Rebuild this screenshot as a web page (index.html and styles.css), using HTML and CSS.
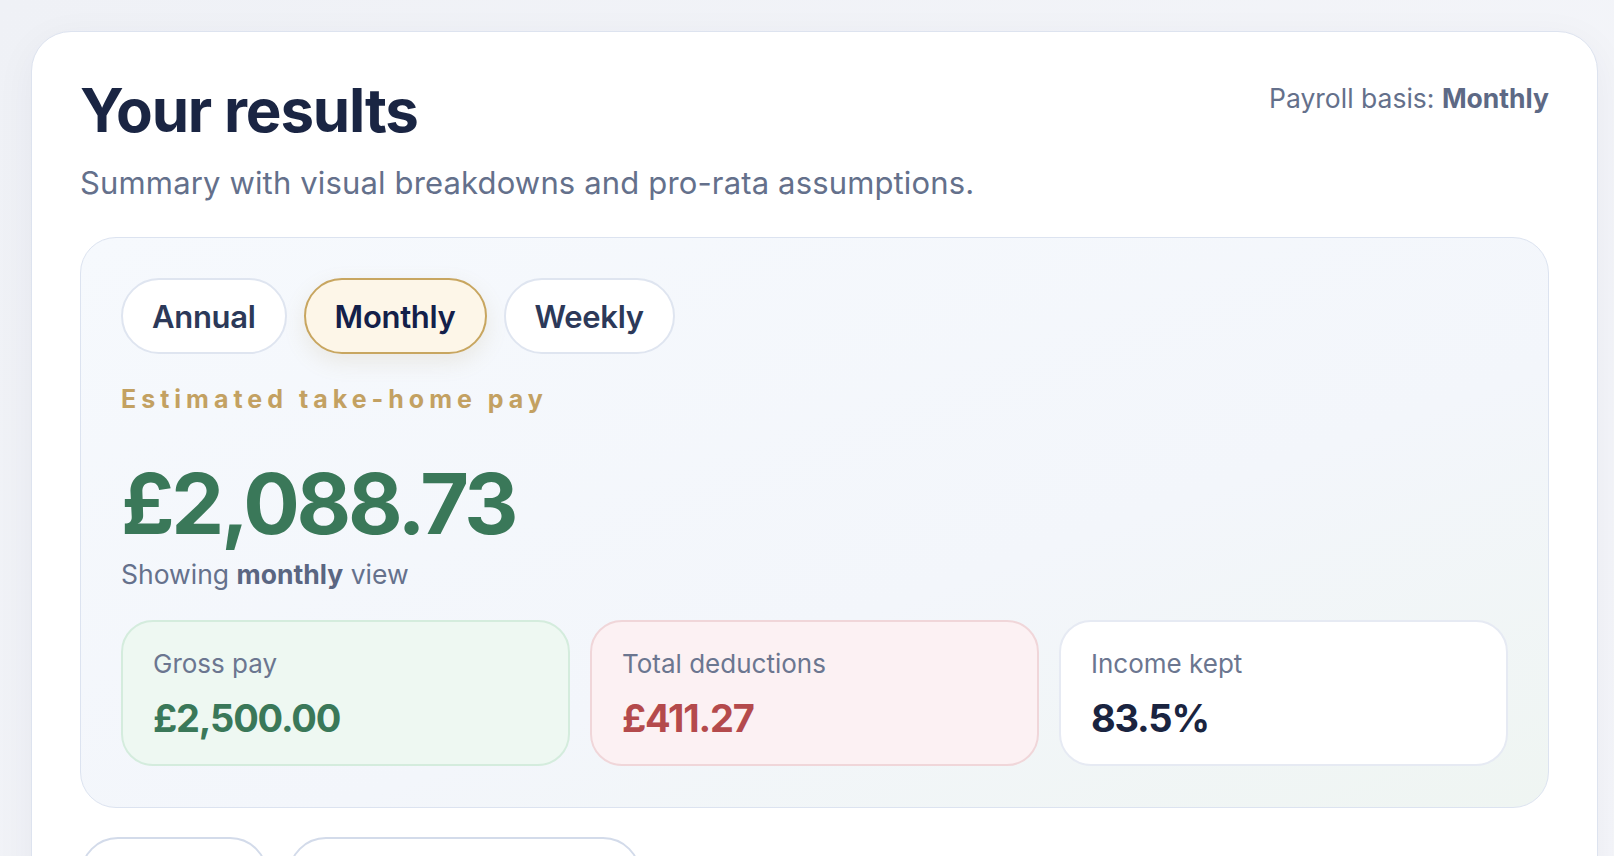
FILE: index.html
```html
<!DOCTYPE html>
<html lang="en">
<head>
    <meta charset="UTF-8">
    <meta name="viewport" content="width=device-width, initial-scale=1.0">
    <title>Your results</title>
    <link rel="stylesheet" href="styles.css">
</head>
<body>
    <div class="page">
        <section class="results-card">
            <header class="results-head">
                <div>
                    <h1>Your results</h1>
                    <p class="subtitle">Summary with visual breakdowns and pro-rata assumptions.</p>
                </div>
                <div class="basis">Payroll basis: <strong>Monthly</strong></div>
            </header>

            <div class="summary-panel">
                <div class="period-tabs">
                    <button class="period-tab">Annual</button>
                    <button class="period-tab active">Monthly</button>
                    <button class="period-tab">Weekly</button>
                </div>

                <div class="eyebrow">Estimated take-home pay</div>
                <div class="take-home">£2,088.73</div>
                <div class="view-note">Showing <strong>monthly</strong> view</div>

                <div class="stats">
                    <div class="stat stat-gross">
                        <div class="stat-label">Gross pay</div>
                        <div class="stat-value">£2,500.00</div>
                    </div>
                    <div class="stat stat-deductions">
                        <div class="stat-label">Total deductions</div>
                        <div class="stat-value">£411.27</div>
                    </div>
                    <div class="stat stat-kept">
                        <div class="stat-label">Income kept</div>
                        <div class="stat-value">83.5%</div>
                    </div>
                </div>
            </div>

            <!-- lower view switcher, only its top edge fits in the window -->
            <div class="view-tabs">
                <button class="view-tab view-tab-charts"></button>
                <button class="view-tab view-tab-assumptions"></button>
            </div>
        </section>
    </div>
</body>
</html>
```

FILE: styles.css
```css
body {
    margin: 0;
    font-family: 'Inter', 'Noto Sans', sans-serif;
    background: linear-gradient(135deg, #eff1f6, #f5f6fa);
    color: #1b2744;
    overflow: hidden;
}
.page {
    padding: 31px 16px 0 31px;
}
.results-card {
    background: #ffffff;
    border: 1px solid #dde3ef;
    border-radius: 40px;
    padding: 42px 48px 48px 48px;
    box-shadow: 0 10px 40px rgba(30, 45, 80, 0.05);
}
.results-head {
    display: flex;
    justify-content: space-between;
    align-items: flex-start;
}
h1 {
    margin: 0;
    font-size: 60px;
    line-height: 1.2;
    font-weight: 700;
    letter-spacing: -1.2px;
    color: #1a2543;
}
.subtitle {
    margin: 18px 0 0 0;
    font-size: 31px;
    color: #64708b;
    letter-spacing: 0.15px;
}
.basis {
    margin-top: 8px;
    font-size: 26.5px;
    color: #64708b;
}
.basis strong {
    font-weight: 700;
    color: #5d6985;
}
.summary-panel {
    margin-top: 36px;
    border: 1px solid #dce3f0;
    border-radius: 36px;
    padding: 40px 40px 41px 40px;
    background: linear-gradient(160deg, #f6f9fd 0%, #f3f6fb 60%, #eff5f2 100%);
}
.period-tabs {
    display: flex;
    gap: 17px;
}
.period-tab {
    font-family: inherit;
    height: 76px;
    padding: 0 29px;
    border-radius: 38px;
    border: 2px solid #dfe5f0;
    background: #ffffff;
    font-size: 31px;
    font-weight: 600;
    color: #2c3959;
    letter-spacing: -0.3px;
}
.period-tab.active {
    background: #fdf6e8;
    border-color: #c8a660;
    color: #13204a;
    box-shadow: 0 8px 22px rgba(170, 140, 80, 0.14);
}
.eyebrow {
    margin-top: 30px;
    font-size: 25px;
    font-weight: 700;
    letter-spacing: 5px;
    color: #c3a162;
}
.take-home {
    margin-top: 48px;
    font-size: 84px;
    line-height: 1;
    font-weight: 700;
    letter-spacing: -3.3px;
    color: #3a7859;
}
.view-note {
    margin-top: 12px;
    font-size: 26.5px;
    color: #65718c;
}
.view-note strong {
    color: #5a6682;
}
.stats {
    margin-top: 30px;
    display: grid;
    grid-template-columns: repeat(3, 1fr);
    gap: 20px;
}
.stat {
    height: 146px;
    box-sizing: border-box;
    padding: 26px 30px;
    border-radius: 32px;
    border: 2px solid #e6eaf3;
    background: #ffffff;
}
.stat-label {
    font-size: 26px;
    color: #6b7690;
}
.stat-value {
    margin-top: 16px;
    font-size: 38px;
    font-weight: 700;
    letter-spacing: -1.2px;
    color: #1a2440;
}
.stat-gross {
    background: #eef8f2;
    border-color: #d4ecdd;
}
.stat-gross .stat-value {
    color: #3a7859;
}
.stat-deductions {
    background: #fcf1f3;
    border-color: #f0d6d9;
}
.stat-deductions .stat-value {
    color: #b44a4c;
}
.view-tabs {
    margin-top: 29px;
    display: flex;
    gap: 20px;
}
.view-tab {
    height: 76px;
    border-radius: 38px;
    border: 2px solid #d3dbea;
    background: #ffffff;
}
.view-tab-charts {
    width: 188px;
}
.view-tab-assumptions {
    width: 353px;
}
```
